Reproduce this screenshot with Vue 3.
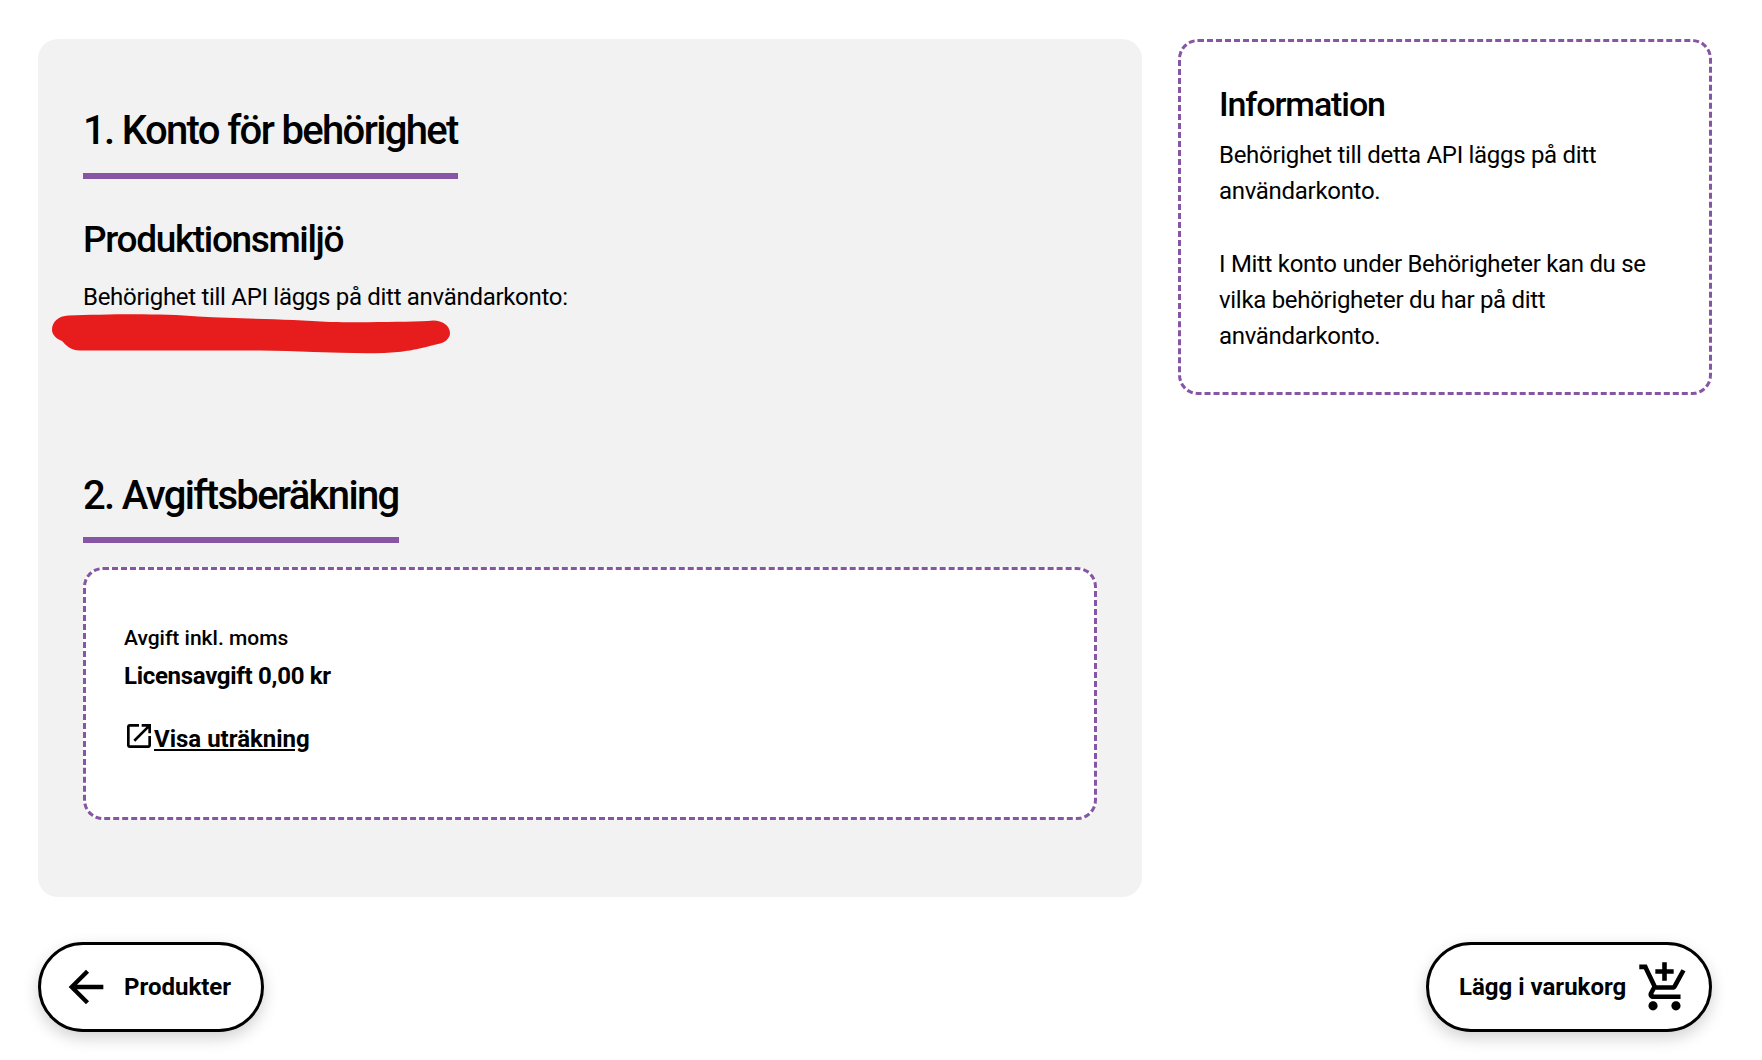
<template>
  <div class="page">
    <div class="columns">
      <main class="panel">
        <h2 class="step-title">1. Konto för behörighet</h2>
        <h3 class="env-title">Produktionsmiljö</h3>
        <p class="env-text">Behörighet till API läggs på ditt användarkonto:</p>
        <svg class="scribble" width="400" height="40" viewBox="0 0 400 40" aria-hidden="true">
          <path d="M14.500 1.500 C52 0 108 -1 144 2.500 C191 5 237 5 276 8 C309 8.500 351 8 374 7 C385 4.500 396 10 396 19 C396 25 390 29 384 30 C361 36 351 38 330 39 C289 40 248 37 206 36.500 L26 36.500 C16 36.500 12 31 8 27 C2 25 -2 20 -2 16 C-2 8 4 2 14.500 1.500 Z" />
        </svg>

        <h2 class="step-title second">2. Avgiftsberäkning</h2>
        <section class="fee-box">
          <div class="fee-label">Avgift inkl. moms</div>
          <div class="fee-value">Licensavgift 0,00 kr</div>
          <a class="fee-link" href="#">
            <svg width="32" height="32" viewBox="0 0 24 24"><path d="M19 19H5V5h7V3H5c-1.11 0-2 .9-2 2v14c0 1.1.89 2 2 2h14c1.1 0 2-.9 2-2v-7h-2v7zM14 3v2h3.590l-9.830 9.830 1.410 1.410L19 6.410V10h2V3h-7z" /></svg>
            <span>Visa uträkning</span>
          </a>
        </section>
      </main>

      <aside class="info-box">
        <h3 class="info-title">Information</h3>
        <p>Behörighet till detta API läggs på ditt användarkonto.</p>
        <p>I Mitt konto under Behörigheter kan du se vilka behörigheter du har på ditt användarkonto.</p>
      </aside>
    </div>

    <div class="actions">
      <button class="pill back" type="button">
        <svg width="52" height="52" viewBox="0 0 24 24"><path d="M20 11H7.830l5.590-5.590L12 4l-8 8 8 8 1.410-1.410L7.830 13H20v-2z" /></svg>
        <span>Produkter</span>
      </button>
      <button class="pill cart" type="button">
        <span>Lägg i varukorg</span>
        <svg width="55" height="55" viewBox="0 0 24 24"><path d="M11 9h2V6h3V4h-3V1h-2v3H8v2h3v3zm-4 9c-1.100 0-1.990.9-1.990 2S5.900 22 7 22s2-.9 2-2-.9-2-2-2zm10 0c-1.100 0-1.990.9-1.990 2s.89 2 1.990 2 2-.9 2-2-.9-2-2-2zm-9.830-3.250l.03-.12.9-1.630h7.450c.75 0 1.410-.41 1.750-1.030l3.860-7.010L19.420 4h-.01l-1.100 2-2.760 5H8.530l-.13-.27L6.160 6l-.95-2-.94-2H1v2h2l3.600 7.590-1.350 2.450c-.16.28-.25.61-.25.96 0 1.100.9 2 2 2h12v-2H7.420c-.13 0-.25-.11-.25-.25z" /></svg>
      </button>
    </div>
  </div>
</template>

<script setup>
</script>

<style>
html, body { background: #fff; }
</style>

<style scoped>
.page {
  box-sizing: border-box;
  width: 1762px;
  height: 1060px;
  padding: 39px 50px 0 38px;
  font-family: Roboto, "Liberation Sans", sans-serif;
  color: #000;
}

.columns {
  display: grid;
  grid-template-columns: 1104px 534px;
  gap: 36px;
  align-items: start;
}

.panel {
  position: relative;
  box-sizing: border-box;
  height: 858px;
  padding: 68px 45px 0;
  background: #f2f2f2;
  border-radius: 20px;
}

.step-title {
  display: table;
  margin: 0;
  padding-bottom: 18px;
  border-bottom: 6px solid #8656a4;
  font-size: 40px;
  line-height: 48px;
  font-weight: 500;
  letter-spacing: -1.65px;
}

.step-title.second { margin-top: 157px; padding-bottom: 17px; }

.env-title {
  margin: 40px 0 0;
  font-size: 37px;
  line-height: 42px;
  font-weight: 500;
  letter-spacing: -1.35px;
}

.env-text {
  margin: 18px 0 0;
  font-size: 24px;
  line-height: 36px;
  letter-spacing: -0.3px;
}

.scribble {
  position: absolute;
  left: 16px;
  top: 275px;
  overflow: visible;
}
.scribble path { fill: #e71d1d; }

.fee-box {
  box-sizing: border-box;
  width: 1014px;
  height: 253px;
  margin-top: 24px;
  padding: 52px 38px 0;
  background: #fff;
  border: 3px dashed #8656a4;
  border-radius: 20px;
}

.fee-label { font-size: 21px; line-height: 32px; font-weight: 500; }

.fee-value {
  margin-top: 6px;
  font-size: 24px;
  line-height: 32px;
  font-weight: 700;
  letter-spacing: -0.3px;
}

.fee-link {
  display: flex;
  align-items: center;
  margin-top: 28px;
  color: #000;
  font-size: 24px;
  line-height: 32px;
  font-weight: 700;
  text-decoration: none;
}
.fee-link span { text-decoration: underline; margin-left: -1px; }
.fee-link svg { display: block; margin: 0 0 6px -1px; }

.info-box {
  box-sizing: border-box;
  height: 356px;
  padding: 41px 38px 0;
  border: 3px dashed #8656a4;
  border-radius: 20px;
  font-size: 24px;
  line-height: 36px;
  letter-spacing: -0.3px;
}

.info-box p { margin: 0 0 37px; }

.info-title {
  margin: 0 0 12px;
  font-size: 34px;
  line-height: 42px;
  font-weight: 500;
  letter-spacing: -1.1px;
}

.actions {
  display: flex;
  justify-content: space-between;
  margin-top: 45px;
}

.pill {
  box-sizing: border-box;
  display: flex;
  align-items: center;
  height: 90px;
  background: #fff;
  border: 3px solid #000;
  border-radius: 45px;
  box-shadow: 0 6px 16px rgba(0, 0, 0, 0.18);
  font-family: inherit;
  font-size: 24px;
  font-weight: 700;
  color: #000;
}

.back { width: 226px; padding: 0 0 0 19px; gap: 12px; }
.cart { width: 286px; padding: 0 0 0 30px; gap: 11px; }
</style>
